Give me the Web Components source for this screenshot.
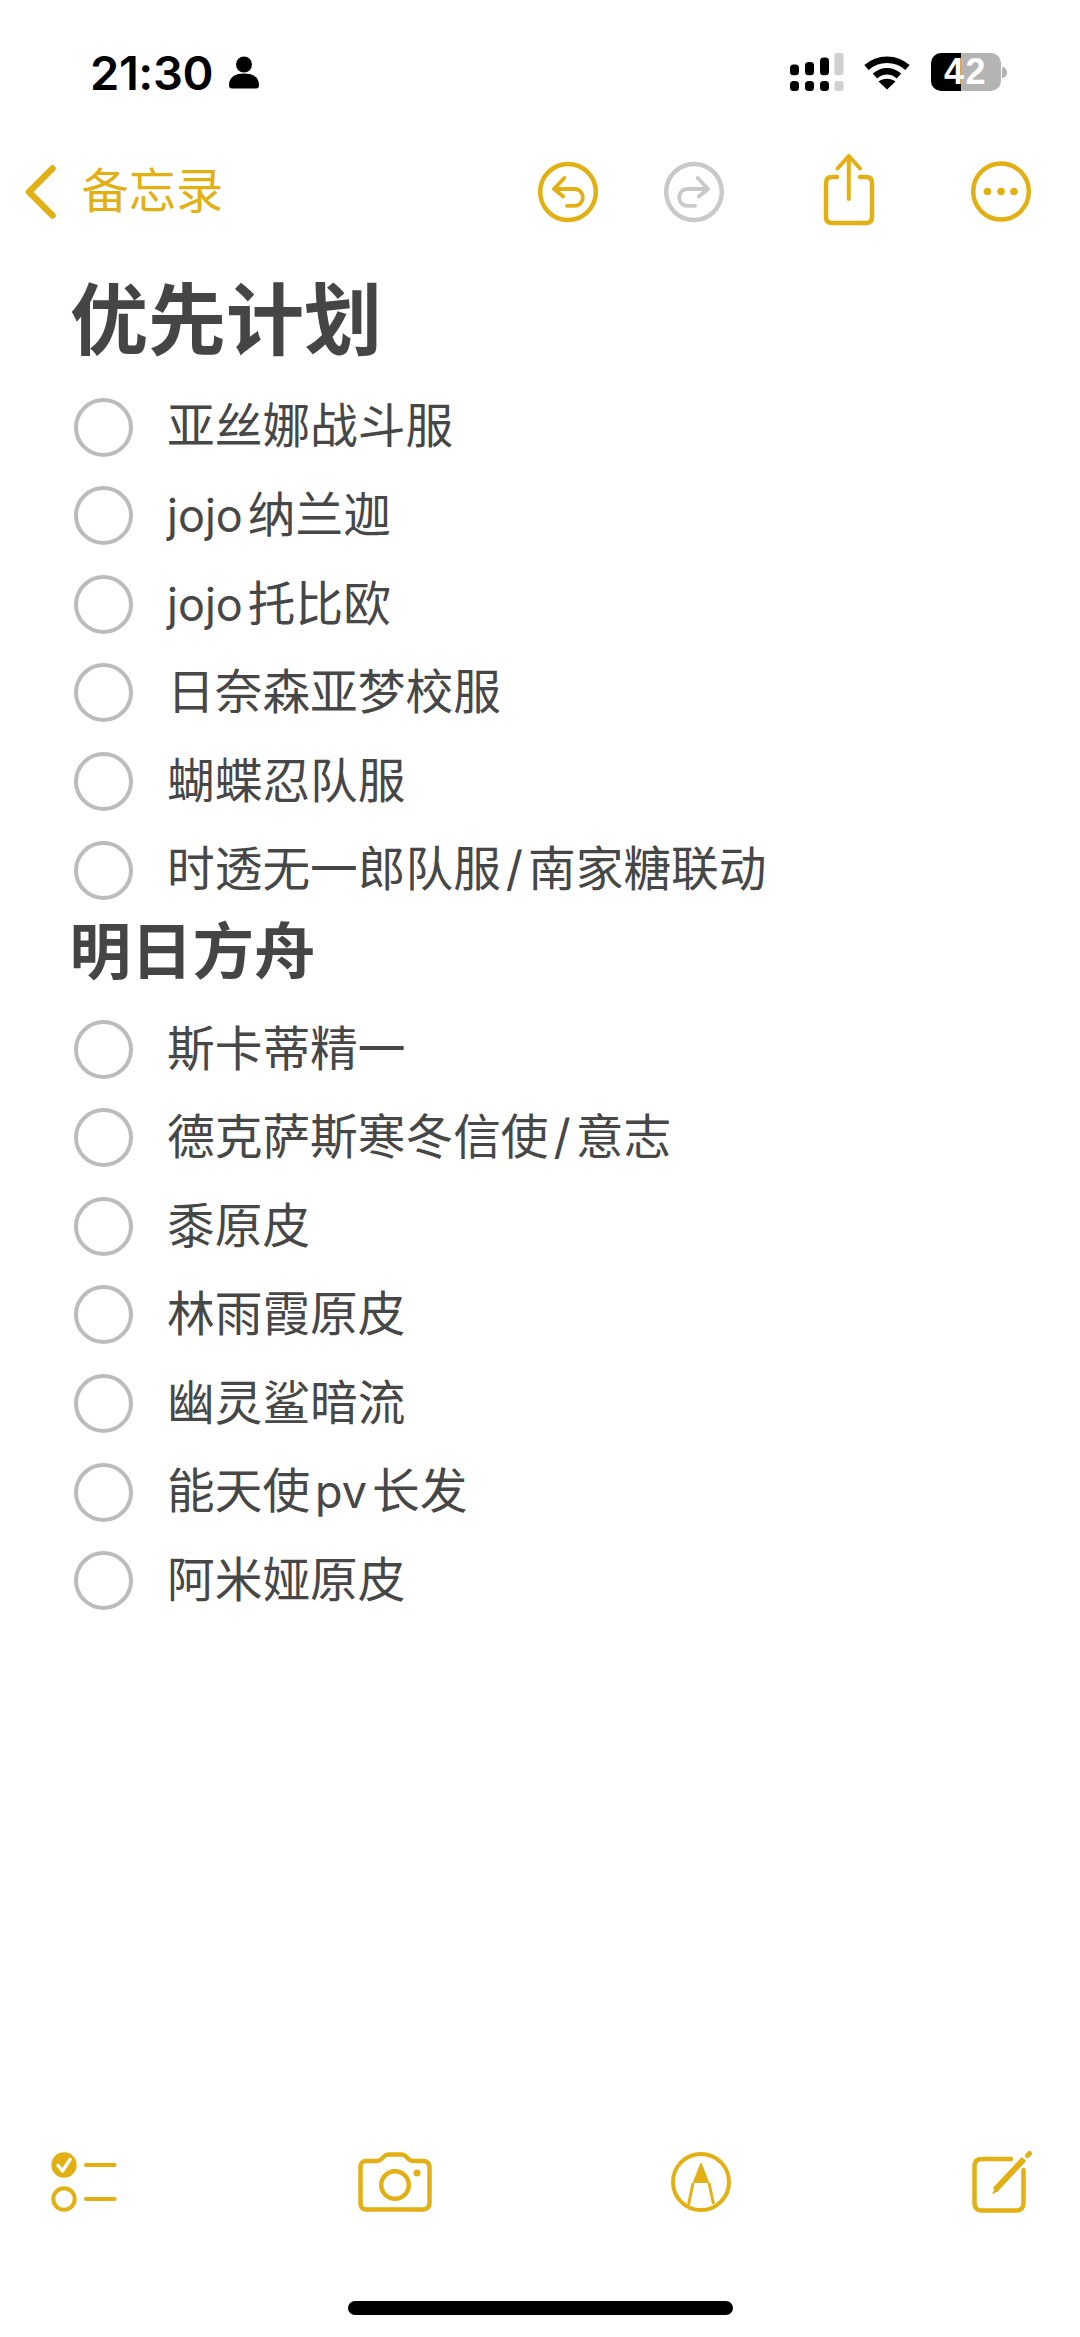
<!DOCTYPE html>
<html lang="zh-CN"><head><meta charset="utf-8"><title>备忘录</title>
<style>html,body{margin:0;padding:0;background:#fff}body{font-family:Inter,"Noto Sans CJK SC",sans-serif}</style>
</head><body>
<note-app>
  <status-bar slot="top" time="21:30" level="42"></status-bar>
  <nav-bar slot="top" back="备忘录"></nav-bar>
  <note-title>优先计划</note-title>
  <check-item>亚丝娜战斗服</check-item>
  <check-item><i-lat>jojo</i-lat><i-gap></i-gap>纳兰迦</check-item>
  <check-item><i-lat>jojo</i-lat><i-gap></i-gap>托比欧</check-item>
  <check-item>日奈森亚梦校服</check-item>
  <check-item>蝴蝶忍队服</check-item>
  <check-item>时透无一郎队服<i-gap></i-gap>/<i-gap></i-gap>南家糖联动</check-item>
  <note-heading>明日方舟</note-heading>
  <check-item>斯卡蒂精一</check-item>
  <check-item>德克萨斯寒冬信使<i-gap></i-gap>/<i-gap></i-gap>意志</check-item>
  <check-item>黍原皮</check-item>
  <check-item>林雨霞原皮</check-item>
  <check-item>幽灵鲨暗流</check-item>
  <check-item>能天使<i-gap></i-gap><i-lat>pv</i-lat><i-gap></i-gap>长发</check-item>
  <check-item>阿米娅原皮</check-item>
  <note-toolbar slot="bottom"></note-toolbar>
  <home-indicator slot="bottom"></home-indicator>
</note-app>
<script>
const def=(name,html,attrs)=>{customElements.define(name,class extends HTMLElement{
  connectedCallback(){ if(this.shadowRoot)return; const r=this.attachShadow({mode:'open'});
    let h=html; for(const a of (attrs||[])) h=h.replaceAll('{{'+a+'}}',this.getAttribute(a)||''); r.innerHTML=h; }
});};
const Y='#e2b013';
def('note-app',`<style>:host{display:flex;flex-direction:column;width:1080px;height:2337px;overflow:hidden;background:#fff;color:#454545;font-family:"Inter","Noto Sans CJK SC",sans-serif}
main{flex:1;display:flex;flex-direction:column;min-height:0;padding-top:30px}</style>
<slot name="top"></slot><main><slot></slot></main><slot name="bottom"></slot>`);
def('i-gap',`<style>:host{display:inline-block;width:5px}</style>`);
def('i-lat',`<style>:host{font-size:45px}</style><slot></slot>`);
def('status-bar',`<style>:host{display:flex;align-items:center;height:144px;padding:0 73px 0 90px;box-sizing:border-box;color:#000}
.t{font:600 47px/1 Inter,sans-serif;letter-spacing:-.4px}
.p{margin-left:16px;display:block}
.r{margin-left:auto;display:flex;align-items:center}
.bat{margin-left:21px;display:flex;align-items:center}
.b{width:70px;height:38px;border-radius:10px;background:linear-gradient(90deg,#000 0 30px,#b4b4b4 30px);color:#fff;font:700 36px/38px "Liberation Sans",sans-serif;text-align:center;letter-spacing:1.500px}
.c{margin-left:1.500px;width:5px;height:11px;background:#b4b4b4;border-radius:0 5px 5px 0}</style>
<span class="t">{{time}}</span>
<svg class="p" width="30" height="33" viewBox="0 0 30 33"><circle cx="15" cy="8.500" r="8" fill="#000"/><path d="M0 29C0 20.500 7 17.500 15 17.500S30 20.500 30 29C30 31.500 29 32.500 27 32.500H3C1 32.500 0 31.500 0 29Z" fill="#000"/></svg>
<div class="r">
<svg width="54" height="38" viewBox="0 0 54 38"><g fill="#000"><rect x="0" y="11.500" width="9" height="10.800" rx="3.500"/><rect x="15" y="9" width="9" height="13.300" rx="3.500"/><rect x="30" y="4.500" width="9" height="17.800" rx="3.500"/><rect x="0" y="28" width="9" height="10" rx="3.500"/><rect x="15" y="28" width="9" height="10" rx="3.500"/><rect x="30" y="28" width="9" height="10" rx="3.500"/></g><g fill="#d0d0d0"><rect x="44.500" y="0" width="9" height="22.300" rx="2.500"/><rect x="44.500" y="28" width="9" height="10" rx="2.500"/></g></svg>
<svg style="margin-left:20px" width="46" height="36" viewBox="0 0 46 36"><path d="M2.500 13.500C14 3 32 3 43.500 13.500" fill="none" stroke="#000" stroke-width="6.500"/><path d="M11 22C18 15.500 28 15.500 35 22" fill="none" stroke="#000" stroke-width="6.500"/><path d="M14.500 27.500C19.500 23.800 26.500 23.800 31.500 27.500L23 35.500Z" fill="#000"/></svg>
<div class="bat"><div class="b">{{level}}</div><div class="c"></div></div>
</div>`,['time','level']);
def('nav-bar',`<style>:host{display:flex;align-items:center;height:96px;padding:0 49px 0 25px;box-sizing:border-box;color:${Y}}
.l{margin:-8px 0 0 24.500px;font:400 47.300px/1 "Noto Sans CJK SC",sans-serif}
.r{margin-left:auto;display:flex;align-items:center}
svg{display:block;fill:none;stroke:${Y};stroke-width:4.500;stroke-linecap:round;stroke-linejoin:round}
svg.g{stroke:#c9c9c9}</style>
<svg style="stroke-width:6.500" width="32" height="56" viewBox="0 0 32 56"><path d="M27.500 4.500 4 28 27.500 51.500"/></svg>
<span class="l">{{back}}</span>
<div class="r">
<svg width="60" height="64" viewBox="0 0 60 64"><ellipse cx="30" cy="32" rx="27.800" ry="28"/><path d="M26.300 18 16 29 25.200 36.500M16 29H36.300C41.500 29 44.800 33 44.800 37.500S41.500 45.800 36.300 45.800H29" stroke-width="3.800"/></svg>
<svg class="g" style="margin-left:66px" width="60" height="64" viewBox="0 0 60 64"><ellipse cx="30" cy="32" rx="27.800" ry="28"/><path d="M33.700 18 44 29 34.800 36.500M44 29H23.700C18.500 29 15.200 33 15.200 37.500S18.500 45.800 23.700 45.800H31" stroke-width="3.800"/></svg>
<svg style="margin-left:97px;margin-top:-2px" width="56" height="76" viewBox="0 0 56 76"><path d="M16 24H11C7 24 5 26 5 30V64C5 68 7 70 11 70H45C49 70 51 68 51 64V30C51 26 49 24 45 24H39"/><path d="M27.800 46V3M16.500 15.500 27.800 3 39 15.500" stroke-width="4"/></svg>
<svg style="margin-left:94px" width="60" height="64" viewBox="0 0 60 64"><ellipse cx="30" cy="31.500" rx="27.800" ry="28"/><g fill="${Y}" stroke="none"><circle cx="16.500" cy="31.500" r="3.800"/><circle cx="30" cy="31.500" r="3.800"/><circle cx="43" cy="31.500" r="3.800"/></g></svg>
</div>`,['back']);
def('note-title',`<style>:host{display:block;height:100px;margin:1px 0 12px 70px;font:700 78px/100px "Inter","Noto Sans CJK SC",sans-serif;color:#454545}</style><slot></slot>`);
def('note-heading',`<style>:host{display:block;height:90.800px;margin-left:69.500px;font:700 61.500px/76px "Inter","Noto Sans CJK SC",sans-serif;color:#454545}</style><slot></slot>`);
def('check-item',`<style>:host{display:flex;align-items:center;height:88.550px;padding-left:74px;font:400 47.700px/1 "Inter","Noto Sans CJK SC",sans-serif;color:#474747}
.c{flex:none;width:59px;height:59px;box-sizing:border-box;border:4px solid #bcbcbc;border-radius:50%;margin-right:34px}
.t{white-space:nowrap}</style><span class="c"></span><span class="t"><slot></slot></span>`);
def('note-toolbar',`<style>:host{display:flex;align-items:center;height:90px;padding-left:51.400px;box-sizing:border-box}
svg{display:block;flex:none;fill:none;stroke:${Y};stroke-width:4.500;stroke-linecap:round;stroke-linejoin:round}</style>
<svg width="66" height="62" viewBox="0 0 66 62"><circle cx="13" cy="14" r="12.700" fill="${Y}" stroke="none"/><path d="M7 14.500 11.500 20 19 8.500" stroke="#fff" stroke-width="3.500"/><circle cx="13" cy="48" r="10.700" stroke-width="4"/><path d="M35 14H63.600M35 48H63.600" stroke-width="4"/></svg>
<svg style="margin-left:240.500px" width="74" height="60" viewBox="0 0 74 60"><path d="M8 9H19C21 9 22 8.500 23.500 7L26 4.500C27.500 3 28.500 2.500 30.500 2.500H43.500C45.500 2.500 46.500 3 48 4.500L50.500 7C52 8.500 53 9 55 9H65C69 9 71.500 11.500 71.500 15V51C71.500 55 69 57.500 65 57.500H8C4.500 57.500 2.500 55 2.500 51V15C2.500 11.500 4.500 9 8 9Z"/><circle cx="37" cy="33" r="13.800"/><circle cx="59" cy="21" r="3.500" fill="${Y}" stroke="none"/></svg>
<svg style="margin-left:237px" width="64" height="64" viewBox="0 0 64 64"><circle cx="32" cy="32" r="28" stroke-width="4"/><path d="M32 14 25 32H39Z" fill="${Y}" stroke="${Y}" stroke-width="2"/><path d="M24 33 19.500 55M40 33 44.500 54" stroke-width="3" stroke-linecap="butt"/></svg>
<svg style="margin-left:238px" width="62" height="64" viewBox="0 0 62 64"><path d="M40 9H11C6 9 3.500 11.500 3.500 16V53C3.500 58 6 60.500 11 60.500H45C50 60.500 52.500 58 52.500 53V20"/><path d="M24 40 53 9" stroke-width="6" stroke-linecap="butt"/><path d="M21 44.500 24.500 37 28 40.500Z" fill="${Y}" stroke="none"/><path d="M56.500 5.500 58.500 3.500" stroke-width="5"/></svg>`);
def('home-indicator',`<style>:host{display:block;height:110px;padding-top:74px;box-sizing:border-box}
div{width:385px;height:14px;margin-left:348px;border-radius:7px;background:#000}</style><div></div>`);
</script>
</body></html>
